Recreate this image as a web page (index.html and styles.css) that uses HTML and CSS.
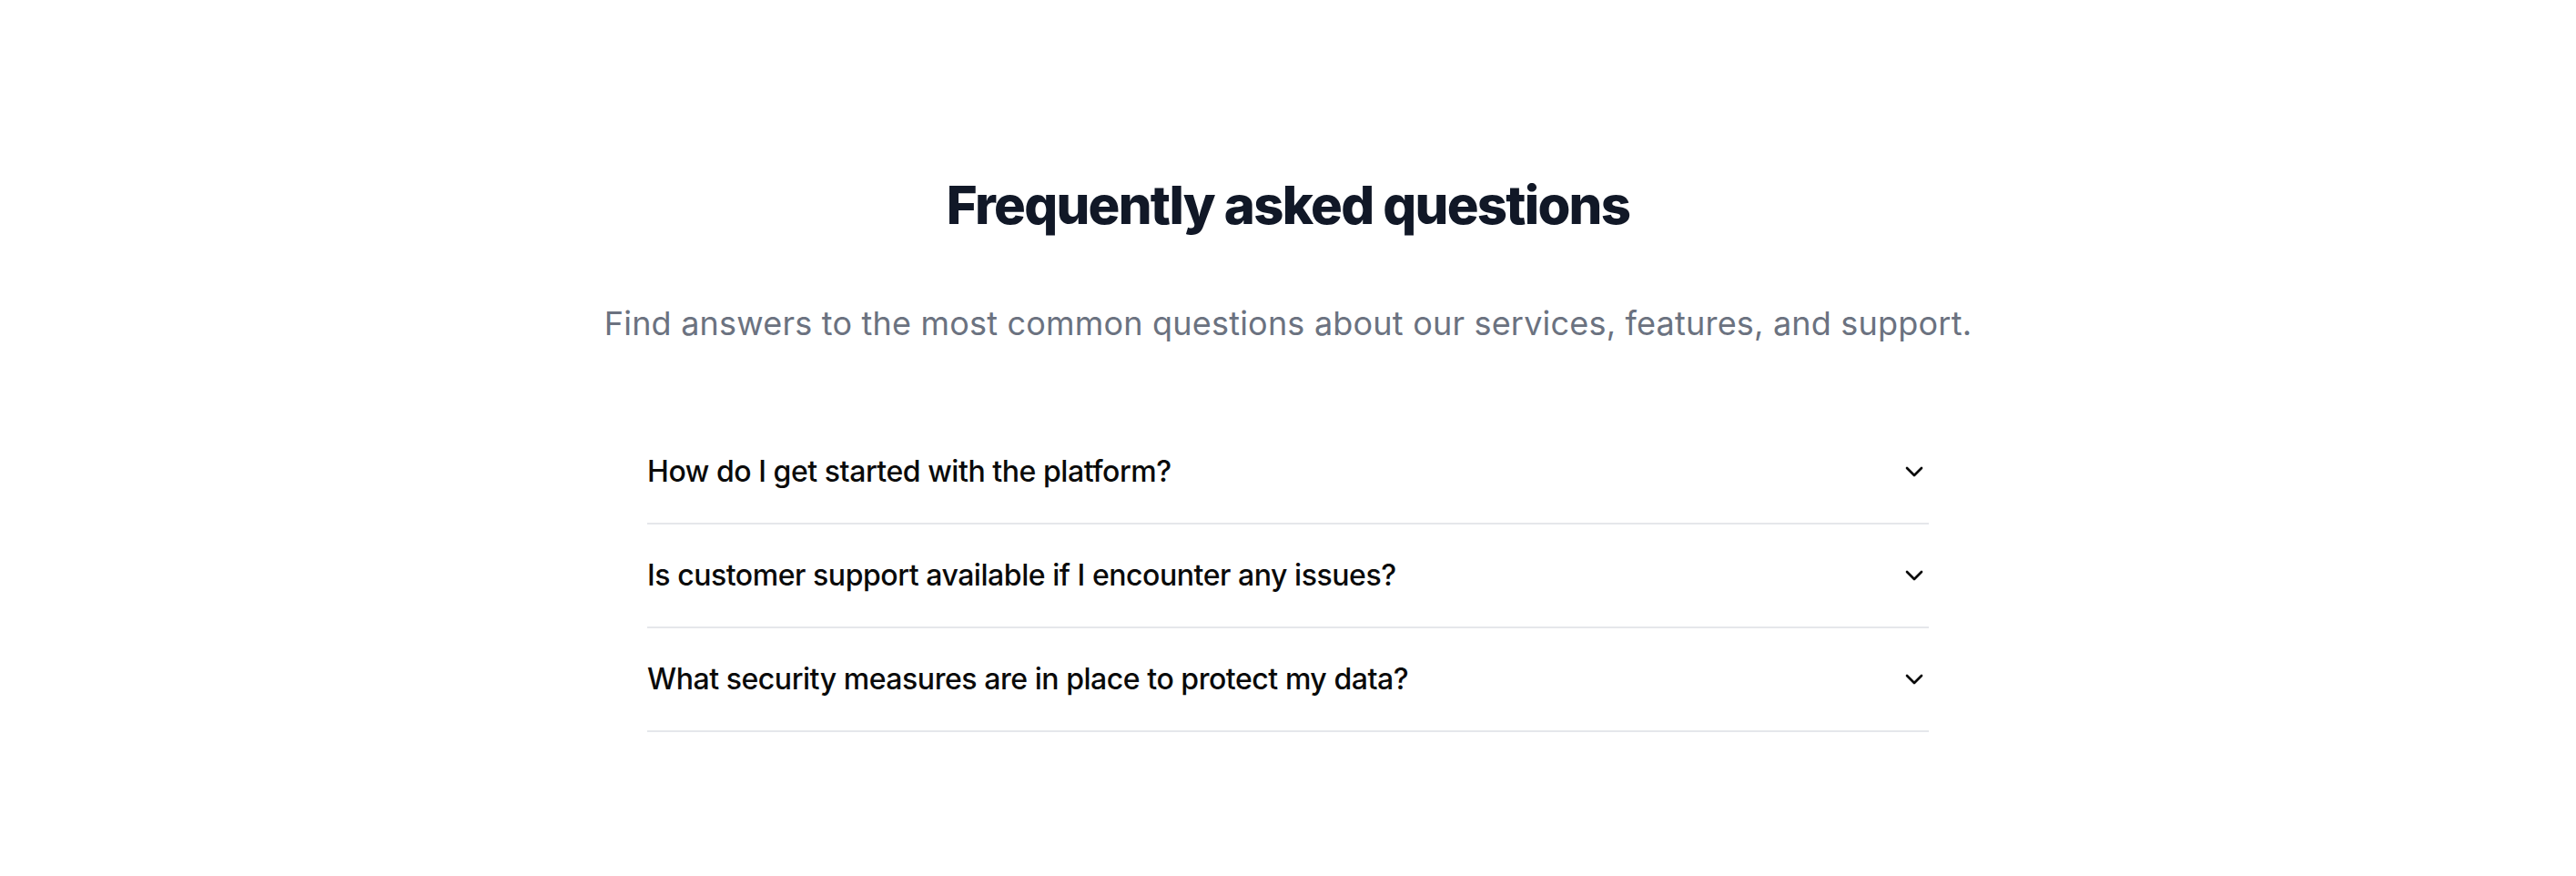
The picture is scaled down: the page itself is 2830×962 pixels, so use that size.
FILE: index.html
```html
<!DOCTYPE html>
<html lang="en">
<head>
<meta charset="utf-8">
<title>FAQ</title>
<link rel="stylesheet" href="styles.css">
</head>
<body>
<section class="faq">
  <h2 class="faq-title">Frequently asked questions</h2>
  <p class="faq-subtitle">Find answers to the most common questions about our services, features, and support.</p>
  <div class="faq-list">
    <div class="faq-item">
      <span class="faq-q">How do I get started with the platform?</span>
      <svg class="chev" viewBox="0 0 24 24" fill="none" stroke="currentColor" stroke-width="2" stroke-linecap="round" stroke-linejoin="round"><path d="m6 9 6 6 6-6"/></svg>
    </div>
    <div class="faq-item">
      <span class="faq-q">Is customer support available if I encounter any issues?</span>
      <svg class="chev" viewBox="0 0 24 24" fill="none" stroke="currentColor" stroke-width="2" stroke-linecap="round" stroke-linejoin="round"><path d="m6 9 6 6 6-6"/></svg>
    </div>
    <div class="faq-item">
      <span class="faq-q">What security measures are in place to protect my data?</span>
      <svg class="chev" viewBox="0 0 24 24" fill="none" stroke="currentColor" stroke-width="2" stroke-linecap="round" stroke-linejoin="round"><path d="m6 9 6 6 6-6"/></svg>
    </div>
  </div>
</section>
</body>
</html>
```
FILE: styles.css
```css
html, body {
  margin: 0;
  padding: 0;
  background: #ffffff;
}
body {
  font-family: Inter, "Noto Sans", sans-serif;
  -webkit-font-smoothing: antialiased;
}
.faq {
  display: flex;
  flex-direction: column;
  align-items: center;
  padding-top: 189px;
}
.faq-title {
  margin: 0;
  font-size: 58px;
  line-height: 72px;
  font-weight: 800;
  letter-spacing: -0.03em;
  color: #111827;
}
.faq-subtitle {
  margin: 66px 0 0;
  font-size: 36px;
  line-height: 56px;
  font-weight: 400;
  letter-spacing: 0.2px;
  color: #6b7280;
}
.faq-list {
  margin-top: 79px;
  width: 1408px;
  display: flex;
  flex-direction: column;
}
.faq-item {
  display: flex;
  align-items: center;
  justify-content: space-between;
  padding: 32px 0;
  border-bottom: 2px solid #e5e7eb;
}
.faq-q {
  font-size: 32px;
  line-height: 48px;
  font-weight: 500;
  letter-spacing: -0.45px;
  color: #0a0a0a;
}
.chev {
  width: 32px;
  height: 32px;
  color: #0a0a0a;
  flex-shrink: 0;
}
```
